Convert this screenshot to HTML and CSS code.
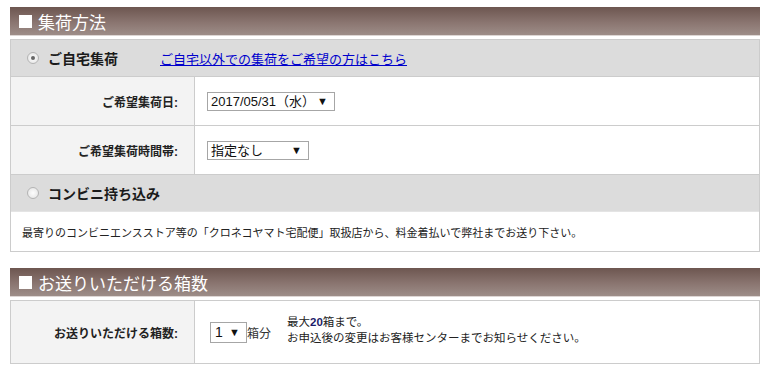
FILE: index.html
```html
<!DOCTYPE html>
<html lang="ja">
<head>
    <meta charset="UTF-8">
    <title>集荷方法</title>
    <link rel="stylesheet" href="styles.css">
</head>
<body>

<div class="wrap">
    <h2 class="sec-title"><span class="sq"></span>集荷方法</h2>
    <div class="box">
        <div class="opt-row">
            <span class="radio on"></span>
            <span class="opt-label">ご自宅集荷</span>
            <a href="#" class="other-link">ご自宅以外での集荷をご希望の方はこちら</a>
        </div>
        <div class="form-row">
            <div class="label">ご希望集荷日:</div>
            <div class="field">
                <span class="sel sel-date">2017/05/31（水）</span>
            </div>
        </div>
        <div class="form-row">
            <div class="label">ご希望集荷時間帯:</div>
            <div class="field">
                <span class="sel sel-time">指定なし</span>
            </div>
        </div>
        <div class="opt-row">
            <span class="radio"></span>
            <span class="opt-label">コンビニ持ち込み</span>
        </div>
        <div class="note">最寄りのコンビニエンスストア等の「クロネコヤマト宅配便」取扱店から、料金着払いで弊社までお送り下さい。</div>
    </div>

    <h2 class="sec-title second"><span class="sq"></span>お送りいただける箱数</h2>
    <div class="box">
        <div class="form-row tall">
            <div class="label">お送りいただける箱数:</div>
            <div class="field">
                <span class="sel sel-num">1</span>
                <span class="unit">箱分</span>
                <div class="info">
                    最大<b>20</b>箱まで。<br>
                    お申込後の変更はお客様センターまでお知らせください。
                </div>
            </div>
        </div>
    </div>
</div>

</body>
</html>
```

FILE: styles.css
```css
body {
    margin: 0;
    padding: 0;
    background: #fff;
    font-family: "Liberation Sans", "Noto Sans CJK JP", sans-serif;
    color: #222;
}

.wrap {
    width: 750px;
    margin: 7px 0 0 10px;
}

.sec-title {
    height: 28px;
    margin: 0 0 4px;
    padding-left: 9px;
    display: flex;
    align-items: center;
    gap: 6px;
    font-size: 17px;
    font-weight: normal;
    color: #fff;
    background: linear-gradient(#6d5650, #8a7570 55%, #9d8d88);
    box-shadow: 0 1px 0 #ddd6d4;
}

.sec-title.second {
    margin-top: 16px;
}

.sq {
    width: 13px;
    height: 13px;
    background: #fff;
}

.box {
    border: 1px solid #ccc;
}

.opt-row {
    height: 36px;
    display: flex;
    align-items: center;
    padding-left: 16px;
    background: #dcdcdc;
}

.form-row + .opt-row {
    border-top: 1px solid #ccc;
}

.radio {
    width: 10px;
    height: 10px;
    border: 1px solid #b4b4b4;
    border-radius: 50%;
    background: radial-gradient(#fdfdfd, #e2e2e2);
    display: flex;
    align-items: center;
    justify-content: center;
}

.radio.on::after {
    content: "";
    width: 4px;
    height: 4px;
    border-radius: 50%;
    background: #666;
}

.opt-label {
    margin-left: 9px;
    font-size: 14px;
    font-weight: bold;
    color: #1a1a1a;
}

.other-link {
    margin-left: 42px;
    font-size: 13px;
    color: #0000cc;
    text-decoration: underline;
}

.form-row {
    display: grid;
    grid-template-columns: 184px 1fr;
    height: 48px;
    border-top: 1px solid #ccc;
}

.form-row.tall {
    height: 62px;
    border-top: none;
}

.label {
    background: #f3f3f3;
    border-right: 1px solid #ccc;
    display: flex;
    align-items: center;
    justify-content: flex-end;
    padding-right: 16px;
    font-size: 12px;
    font-weight: bold;
    color: #222;
}

.field {
    display: flex;
    align-items: center;
    padding-left: 12px;
    font-size: 12px;
}

.sel {
    position: relative;
    box-sizing: border-box;
    height: 19px;
    border: 1px solid #a6a6a6;
    background: #fff;
    font-size: 13px;
    line-height: 17px;
    padding-left: 3px;
    color: #111;
}

.sel::after {
    content: "▼";
    position: absolute;
    right: 6px;
    top: 0;
    font-size: 11px;
    color: #111;
}

.sel-date { width: 128px; }
.sel-time { width: 102px; }

.sel-num {
    width: 37px;
    height: 21px;
    line-height: 19px;
    margin-left: 3px;
    font-size: 14px;
    padding-left: 4px;
}

.unit {
    font-size: 12px;
    color: #333;
}

.info {
    margin-left: 16px;
    margin-top: -4px;
    font-size: 11.5px;
    line-height: 16px;
    color: #222;
}

.info b {
    color: #1c1c6a;
}

.note {
    height: 39px;
    display: flex;
    align-items: center;
    padding-left: 11px;
    font-size: 11px;
    background: #fff;
    border-top: 1px solid #e4e4e4;
}
```
